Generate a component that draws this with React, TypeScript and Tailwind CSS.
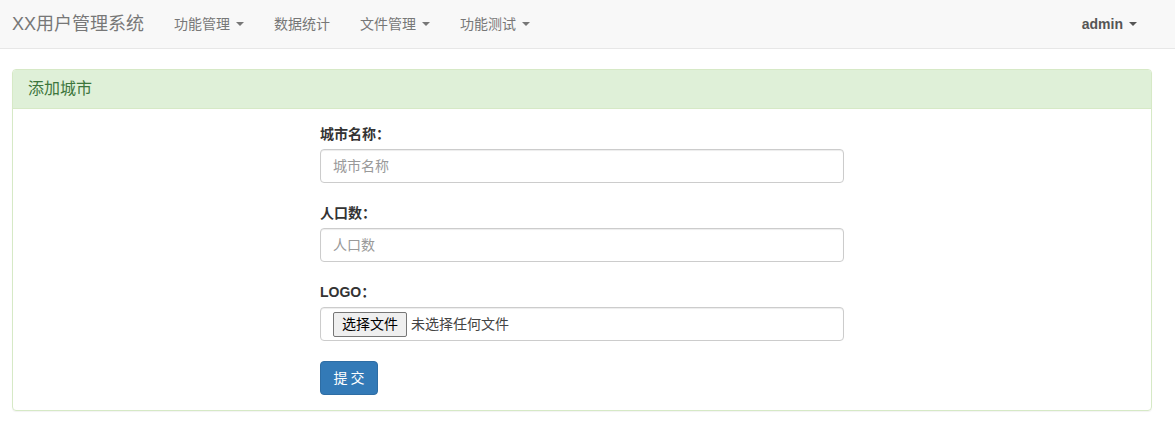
import React from "react";

const font = { fontFamily: '"Liberation Sans", "Noto Sans CJK SC", Arial, sans-serif' };

function Caret() {
  return (
    <span className="inline-block ml-[6px] align-middle w-0 h-0 border-t-[4px] border-t-current border-x-[4px] border-x-transparent" />
  );
}

export default function App() {
  return (
    <div className="w-[1175px] min-h-[443px] bg-white text-[14px] text-[#333] leading-[20px]" style={font}>
      <nav className="h-[49px] bg-[#f8f8f8] border-b border-[#e7e7e7] flex items-center">
        <div className="pl-[12px] pr-[15px] text-[18px] text-[#777] leading-[20px]">XX用户管理系统</div>
        <div className="flex items-center text-[#777] text-[14px]">
          <div className="px-[15px] flex items-center">功能管理<Caret /></div>
          <div className="px-[15px]">数据统计</div>
          <div className="px-[15px] flex items-center">文件管理<Caret /></div>
          <div className="px-[15px] flex items-center">功能测试<Caret /></div>
        </div>
        <div className="ml-auto mr-[23px] px-[15px] flex items-center text-[#555] font-bold">admin<Caret /></div>
      </nav>

      <div className="mt-[20px] ml-[12px] w-[1140px] border border-[#d6e9c6] rounded-[4px] shadow-[0_1px_1px_rgba(0,0,0,0.05)]">
        <div className="h-[39px] bg-[#dff0d8] border-b border-[#d6e9c6] text-[#3c763d] text-[16px] px-[15px] flex items-center rounded-t-[3px]">
          添加城市
        </div>
        <div className="p-[15px]">
          <div className="ml-[292px] w-[524px]">
            <div className="mb-[20px]">
              <label className="block font-bold mb-[5px]">城市名称：</label>
              <div className="h-[34px] border border-[#ccc] rounded-[4px] px-[12px] flex items-center text-[#999] shadow-[inset_0_1px_1px_rgba(0,0,0,0.075)]">城市名称</div>
            </div>
            <div className="mb-[20px]">
              <label className="block font-bold mb-[5px]">人口数：</label>
              <div className="h-[34px] border border-[#ccc] rounded-[4px] px-[12px] flex items-center text-[#999] shadow-[inset_0_1px_1px_rgba(0,0,0,0.075)]">人口数</div>
            </div>
            <div className="mb-[20px]">
              <label className="block font-bold mb-[5px]">LOGO：</label>
              <div className="h-[34px] border border-[#ccc] rounded-[4px] px-[12px] flex items-center text-[#333] shadow-[inset_0_1px_1px_rgba(0,0,0,0.075)]">
                <span className="h-[25px] w-[74px] justify-center flex items-center bg-[#efefef] border border-[#767676] rounded-[2px] text-[14px] text-black mr-[4px]">选择文件</span>
                <span className="text-[14px] text-[#444]">未选择任何文件</span>
              </div>
            </div>
            <button className="h-[34px] w-[58px] bg-[#337ab7] border border-[#2e6da4] rounded-[4px] text-white text-[14px] tracking-[3px] pl-[3px]">提交</button>
          </div>
        </div>
      </div>
    </div>
  );
}
